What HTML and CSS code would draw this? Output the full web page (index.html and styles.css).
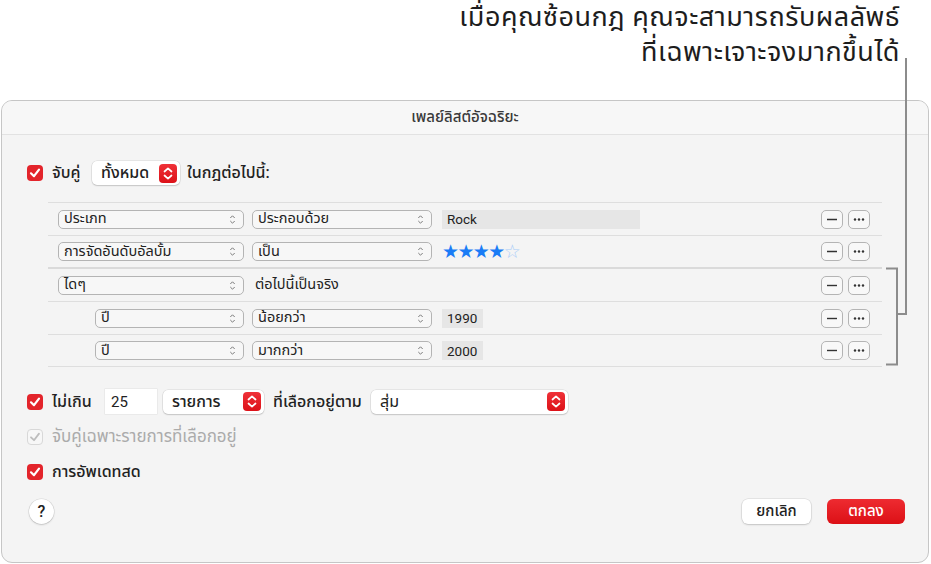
FILE: index.html
```html
<!DOCTYPE html>
<html lang="th">
<head>
<meta charset="utf-8">
<title>เพลย์ลิสต์อัจฉริยะ</title>
<link rel="stylesheet" href="styles.css">
</head>
<body>
<div class="callout">
  <p class="callout-text">เมื่อคุณซ้อนกฎ คุณจะสามารถรับผลลัพธ์<br>ที่เฉพาะเจาะจงมากขึ้นได้</p>
</div>
<svg class="leader" width="931" height="564" viewBox="0 0 931 564">
  <path d="M906 58 V314 H897" fill="none" stroke="#8c8c8c" stroke-width="2"/>
  <path d="M886 268.5 H897 V364.5 H886" fill="none" stroke="#8c8c8c" stroke-width="2"/>
</svg>

<div class="dialog">
  <div class="titlebar">เพลย์ลิสต์อัจฉริยะ</div>
  <div class="content">
    <div class="match-row">
      <span class="check"><svg width="16" height="16" viewBox="0 0 16 16"><path d="M4 8.3 L7 11.2 L12 4.6" fill="none" stroke="#fff" stroke-width="2.2" stroke-linecap="round" stroke-linejoin="round"/></svg></span>
      <span class="label lbl-match">จับคู่</span>
      <span class="popup popup-all">ทั้งหมด<span class="stepper"><svg width="18" height="19" viewBox="0 0 18 19"><path d="M5.5 7.5 L9 4.3 L12.5 7.5 M5.5 11.5 L9 14.7 L12.5 11.5" fill="none" stroke="#fff" stroke-width="1.7" stroke-linecap="round" stroke-linejoin="round"/></svg></span></span>
      <span class="label">ในกฎต่อไปนี้:</span>
    </div>

    <div class="rules">
      <div class="rule">
        <span class="opop w186">ประเภท<svg class="chev" width="7" height="11" viewBox="0 0 7 11"><path d="M1.3 4 L3.5 1.8 L5.7 4 M1.3 7 L3.5 9.2 L5.7 7" fill="none" stroke="#7a7a7a" stroke-width="1"/></svg></span>
        <span class="opop w180">ประกอบด้วย<svg class="chev" width="7" height="11" viewBox="0 0 7 11"><path d="M1.3 4 L3.5 1.8 L5.7 4 M1.3 7 L3.5 9.2 L5.7 7" fill="none" stroke="#7a7a7a" stroke-width="1"/></svg></span>
        <span class="field w198">Rock</span>
        <span class="spacer"></span>
        <span class="sbtn"><svg width="22" height="19" viewBox="0 0 22 19"><path d="M6 9.5 H16" stroke="#333" stroke-width="1.4"/></svg></span>
        <span class="sbtn"><svg width="22" height="19" viewBox="0 0 22 19"><circle cx="7" cy="9.5" r="1.2" fill="#333"/><circle cx="11" cy="9.5" r="1.2" fill="#333"/><circle cx="15" cy="9.5" r="1.2" fill="#333"/></svg></span>
      </div>
      <div class="rule">
        <span class="opop w186">การจัดอันดับอัลบั้ม<svg class="chev" width="7" height="11" viewBox="0 0 7 11"><path d="M1.3 4 L3.5 1.8 L5.7 4 M1.3 7 L3.5 9.2 L5.7 7" fill="none" stroke="#7a7a7a" stroke-width="1"/></svg></span>
        <span class="opop w180">เป็น<svg class="chev" width="7" height="11" viewBox="0 0 7 11"><path d="M1.3 4 L3.5 1.8 L5.7 4 M1.3 7 L3.5 9.2 L5.7 7" fill="none" stroke="#7a7a7a" stroke-width="1"/></svg></span>
        <span class="stars"><span class="on">★★★★</span><span class="off">☆</span></span>
        <span class="spacer"></span>
        <span class="sbtn"><svg width="22" height="19" viewBox="0 0 22 19"><path d="M6 9.5 H16" stroke="#333" stroke-width="1.4"/></svg></span>
        <span class="sbtn"><svg width="22" height="19" viewBox="0 0 22 19"><circle cx="7" cy="9.5" r="1.2" fill="#333"/><circle cx="11" cy="9.5" r="1.2" fill="#333"/><circle cx="15" cy="9.5" r="1.2" fill="#333"/></svg></span>
      </div>
      <div class="rule rule-group">
        <span class="opop w186">ไดๆ<svg class="chev" width="7" height="11" viewBox="0 0 7 11"><path d="M1.3 4 L3.5 1.8 L5.7 4 M1.3 7 L3.5 9.2 L5.7 7" fill="none" stroke="#7a7a7a" stroke-width="1"/></svg></span>
        <span class="plain">ต่อไปนี้เป็นจริง</span>
        <span class="spacer"></span>
        <span class="sbtn"><svg width="22" height="19" viewBox="0 0 22 19"><path d="M6 9.5 H16" stroke="#333" stroke-width="1.4"/></svg></span>
        <span class="sbtn"><svg width="22" height="19" viewBox="0 0 22 19"><circle cx="7" cy="9.5" r="1.2" fill="#333"/><circle cx="11" cy="9.5" r="1.2" fill="#333"/><circle cx="15" cy="9.5" r="1.2" fill="#333"/></svg></span>
      </div>
      <div class="rule rule-nested">
        <span class="opop w149">ปี<svg class="chev" width="7" height="11" viewBox="0 0 7 11"><path d="M1.3 4 L3.5 1.8 L5.7 4 M1.3 7 L3.5 9.2 L5.7 7" fill="none" stroke="#7a7a7a" stroke-width="1"/></svg></span>
        <span class="opop w180">น้อยกว่า<svg class="chev" width="7" height="11" viewBox="0 0 7 11"><path d="M1.3 4 L3.5 1.8 L5.7 4 M1.3 7 L3.5 9.2 L5.7 7" fill="none" stroke="#7a7a7a" stroke-width="1"/></svg></span>
        <span class="field w41">1990</span>
        <span class="spacer"></span>
        <span class="sbtn"><svg width="22" height="19" viewBox="0 0 22 19"><path d="M6 9.5 H16" stroke="#333" stroke-width="1.4"/></svg></span>
        <span class="sbtn"><svg width="22" height="19" viewBox="0 0 22 19"><circle cx="7" cy="9.5" r="1.2" fill="#333"/><circle cx="11" cy="9.5" r="1.2" fill="#333"/><circle cx="15" cy="9.5" r="1.2" fill="#333"/></svg></span>
      </div>
      <div class="rule rule-nested">
        <span class="opop w149">ปี<svg class="chev" width="7" height="11" viewBox="0 0 7 11"><path d="M1.3 4 L3.5 1.8 L5.7 4 M1.3 7 L3.5 9.2 L5.7 7" fill="none" stroke="#7a7a7a" stroke-width="1"/></svg></span>
        <span class="opop w180">มากกว่า<svg class="chev" width="7" height="11" viewBox="0 0 7 11"><path d="M1.3 4 L3.5 1.8 L5.7 4 M1.3 7 L3.5 9.2 L5.7 7" fill="none" stroke="#7a7a7a" stroke-width="1"/></svg></span>
        <span class="field w41">2000</span>
        <span class="spacer"></span>
        <span class="sbtn"><svg width="22" height="19" viewBox="0 0 22 19"><path d="M6 9.5 H16" stroke="#333" stroke-width="1.4"/></svg></span>
        <span class="sbtn"><svg width="22" height="19" viewBox="0 0 22 19"><circle cx="7" cy="9.5" r="1.2" fill="#333"/><circle cx="11" cy="9.5" r="1.2" fill="#333"/><circle cx="15" cy="9.5" r="1.2" fill="#333"/></svg></span>
      </div>
    </div>

    <div class="limit-row">
      <span class="check"><svg width="16" height="16" viewBox="0 0 16 16"><path d="M4 8.3 L7 11.2 L12 4.6" fill="none" stroke="#fff" stroke-width="2.2" stroke-linecap="round" stroke-linejoin="round"/></svg></span>
      <span class="label lbl-limit">ไม่เกิน</span>
      <span class="numfield">25</span>
      <span class="popup popup-items">รายการ<span class="stepper"><svg width="18" height="19" viewBox="0 0 18 19"><path d="M5.5 7.5 L9 4.3 L12.5 7.5 M5.5 11.5 L9 14.7 L12.5 11.5" fill="none" stroke="#fff" stroke-width="1.7" stroke-linecap="round" stroke-linejoin="round"/></svg></span></span>
      <span class="label lbl-by">ที่เลือกอยู่ตาม</span>
      <span class="popup popup-random">สุ่ม<span class="stepper"><svg width="18" height="19" viewBox="0 0 18 19"><path d="M5.5 7.5 L9 4.3 L12.5 7.5 M5.5 11.5 L9 14.7 L12.5 11.5" fill="none" stroke="#fff" stroke-width="1.7" stroke-linecap="round" stroke-linejoin="round"/></svg></span></span>
    </div>

    <div class="opt-row disabled">
      <span class="check check-off"><svg width="16" height="16" viewBox="0 0 16 16"><path d="M4 8.3 L7 11.2 L12 4.6" fill="none" stroke="#bdbdbd" stroke-width="1.8" stroke-linecap="round" stroke-linejoin="round"/></svg></span>
      <span class="label">จับคู่เฉพาะรายการที่เลือกอยู่</span>
    </div>

    <div class="opt-row">
      <span class="check"><svg width="16" height="16" viewBox="0 0 16 16"><path d="M4 8.3 L7 11.2 L12 4.6" fill="none" stroke="#fff" stroke-width="2.2" stroke-linecap="round" stroke-linejoin="round"/></svg></span>
      <span class="label">การอัพเดทสด</span>
    </div>

    <div class="footer">
      <span class="help">?</span>
      <span class="spacer"></span>
      <span class="btn btn-cancel">ยกเลิก</span>
      <span class="btn btn-ok">ตกลง</span>
    </div>
  </div>
</div>
</body>
</html>
```

FILE: styles.css
```css
* { box-sizing: border-box; }
html, body { margin: 0; padding: 0; }
body {
  width: 931px;
  height: 564px;
  background: #ffffff;
  font-family: "Roboto", "Noto Sans Thai", "Noto Sans", sans-serif;
  font-size: 13px;
  color: #222;
  position: relative;
  overflow: hidden;
}

.callout {
  height: 100px;
  padding: 0 31px 0 0;
}
.callout-text {
  margin: 0;
  text-align: right;
  font-size: 27px;
  line-height: 35px;
  letter-spacing: 0.5px;
  color: #1d1d1d;
}

.leader {
  position: absolute;
  left: 0;
  top: 0;
  pointer-events: none;
  z-index: 5;
}

.dialog {
  margin-left: 1px;
  width: 928px;
  height: 463px;
  border: 1px solid #c6c6c6;
  border-radius: 11px;
  background: #f4f4f4;
  overflow: hidden;
  display: flex;
  flex-direction: column;
}

.titlebar {
  height: 34px;
  flex: none;
  display: flex;
  align-items: center;
  justify-content: center;
  background: #f7f7f7;
  border-bottom: 1px solid #e2e2e2;
  font-size: 15px;
  font-weight: 500;
  color: #3a3a3a;
}

.content {
  flex: 1;
  padding: 26px 23px 0 25px;
  display: flex;
  flex-direction: column;
}

.check {
  width: 16px;
  height: 16px;
  flex: none;
  border-radius: 4px;
  background: #e3242b;
  display: inline-flex;
}
.check-off {
  background: #f7f7f7;
  border: 1px solid #d8d8d8;
}
.check-off svg { margin: -1px; }

.label { white-space: nowrap; }

.match-row {
  height: 24px;
  display: flex;
  align-items: center;
  font-size: 16px;
  font-weight: 500;
}
.match-row .check { margin-right: 9px; }
.lbl-match { width: 40px; }

.popup {
  height: 24px;
  background: #fff;
  border-radius: 5px;
  box-shadow: 0 0 0 0.5px rgba(0,0,0,0.12), 0 1px 1.5px rgba(0,0,0,0.14);
  display: inline-flex;
  align-items: center;
  padding-left: 9px;
  padding-right: 3px;
  font-size: 16px;
  font-weight: 500;
  white-space: nowrap;
}
.popup .stepper {
  margin-left: auto;
  width: 18px;
  height: 19px;
  border-radius: 4px;
  background: linear-gradient(#ef3138, #dc1118);
  display: inline-flex;
}
.popup-all { width: 88px; margin-right: 7px; }
.popup-items { width: 101px; margin: 0 9px 0 6px; }
.popup-random { width: 197px; margin-left: 5px; font-weight: 400; }

.rules {
  margin: 17px 0 0 21px;
  width: 834px;
  border-top: 1px solid #dedede;
}
.rule {
  height: 33px;
  border-bottom: 1px solid #dedede;
  display: flex;
  align-items: center;
  padding: 0 12px 0 10px;
}
.rule:nth-child(2) { border-bottom: 2px solid #dadada; height: 33px; }
.rule-nested { padding-left: 47px; }
.rule:last-child { height: 32px; }

.opop {
  height: 19px;
  border: 1px solid #b4b4b4;
  border-radius: 5px;
  background: #f7f7f7;
  display: inline-flex;
  align-items: center;
  padding: 0 7px 0 5px;
  font-size: 14.5px;
  white-space: nowrap;
  margin-right: 8px;
  flex: none;
}
.opop .chev { margin-left: auto; }
.w186 { width: 186px; }
.w180 { width: 180px; margin-right: 10px; }
.w149 { width: 149px; }

.field {
  height: 19px;
  background: #e6e6e6;
  display: inline-flex;
  align-items: center;
  padding-left: 5px;
  font-size: 13.5px;
  flex: none;
}
.w198 { width: 198px; }
.w41 { width: 41px; }

.stars {
  font-family: "DejaVu Sans", sans-serif;
  font-size: 19px;
  letter-spacing: -1.6px;
  line-height: 19px;
  margin-left: 0;
}
.stars .on { color: #1a7cf6; }
.stars .off { color: #a9cdf8; }

.plain { margin-left: 3px; font-size: 14.5px; }

.spacer { flex: 1; }

.sbtn {
  width: 22px;
  height: 19px;
  border: 1px solid #b4b4b4;
  border-radius: 5px;
  background: #f8f8f8;
  display: inline-flex;
  align-items: center;
  justify-content: center;
  flex: none;
}
.sbtn svg { margin: -1px; }
.sbtn + .sbtn { margin-left: 5px; }

.limit-row {
  margin-top: 22px;
  height: 25px;
  display: flex;
  align-items: center;
  font-size: 16px;
  font-weight: 500;
}
.limit-row .check { margin-right: 9px; }
.lbl-limit { width: 43px; }
.lbl-by { width: 93px; }
.numfield {
  width: 52px;
  height: 25px;
  background: #fff;
  box-shadow: 0 0 0 0.5px rgba(0,0,0,0.08);
  margin-left: 10px;
  display: inline-flex;
  align-items: center;
  padding-left: 6px;
  font-size: 15px;
  font-weight: 400;
}

.opt-row {
  margin-top: 10px;
  height: 25px;
  display: flex;
  align-items: center;
  font-size: 16px;
  font-weight: 500;
}
.opt-row .check { margin-right: 9px; }
.opt-row.disabled { color: #ababab; font-size: 17px; font-weight: 400; }

.footer {
  margin-top: 15px;
  height: 25px;
  display: flex;
  align-items: center;
}
.help {
  width: 25px;
  height: 25px;
  margin-left: 2px;
  border-radius: 50%;
  background: #fff;
  box-shadow: 0 0 0 0.5px rgba(0,0,0,0.12), 0 1px 2px rgba(0,0,0,0.15);
  display: inline-flex;
  align-items: center;
  justify-content: center;
  font-size: 16px;
  font-weight: 500;
  color: #222;
}
.btn {
  height: 25px;
  border-radius: 6px;
  display: inline-flex;
  align-items: center;
  justify-content: center;
  font-size: 15px;
  font-weight: 500;
}
.btn-cancel {
  width: 69px;
  background: #fff;
  box-shadow: 0 0 0 0.5px rgba(0,0,0,0.12), 0 1px 2px rgba(0,0,0,0.15);
  color: #222;
}
.btn-ok {
  width: 78px;
  margin-left: 16px;
  background: linear-gradient(#ee2b31, #dc1016);
  color: #fff;
}
```
